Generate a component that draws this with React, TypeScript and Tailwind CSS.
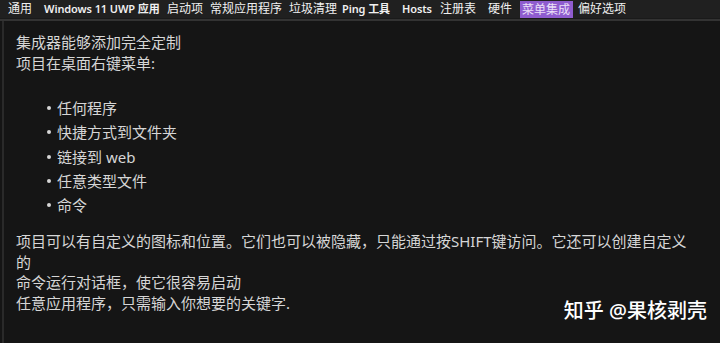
const tabs = [
    {label: "通用", w: "w-[36px]", latin: false},
    {label: "Windows 11 UWP 应用", w: "w-[123px]", latin: true},
    {label: "启动项", w: "w-[43px]", latin: false},
    {label: "常规应用程序", w: "w-[79px]", latin: false},
    {label: "垃圾清理", w: "w-[53px]", latin: false},
    {label: "Ping 工具", w: "w-[60px]", latin: true},
    {label: "Hosts", w: "w-[38px]", latin: true},
    {label: "注册表", w: "w-[48px]", latin: false},
    {label: "硬件", w: "w-[32px]", latin: false},
    {label: "菜单集成", w: "w-[58px]", latin: false, active: true},
    {label: "偏好选项", w: "w-[60px]", latin: false},
]

const items = ["任何程序", "快捷方式到文件夹", "链接到 web", "任意类型文件", "命令"]

export default function App() {
    return (
        <div
            className="w-[720px] h-[343px] bg-[#151515] flex flex-col overflow-hidden relative"
            style={{fontFamily: '"Noto Sans", "Noto Sans CJK SC", sans-serif'}}
        >
            <div className="h-[18px] bg-[#202020] flex items-center pl-[8px] text-[12px] text-[#f0f0f0] whitespace-nowrap">
                {tabs.map(t => (
                    <div key={t.label} className={t.w + " shrink-0 flex items-center"}>
                        {t.active ? (
                            <span className="bg-[#8f5ccf] text-[#ebe0f8] pl-[2px] w-[53px] h-[17px] leading-[17px]">{t.label}</span>
                        ) : (
                            <span className={t.latin ? "font-semibold text-[11px] tracking-[-0.1px]" : ""}>{t.label}</span>
                        )}
                    </div>
                ))}
            </div>
            <div className="h-[1px] bg-[#1a1a1a]" />
            <div className="h-[2px] bg-[#333333]" />
            <div className="flex-1 border-l-[2px] border-[#2a2a2a] ml-[2px] pl-[12px] pt-[11px] text-[15px] text-[#d6d6d6]">
                <div className="leading-[21px]">
                    <div>集成器能够添加完全定制</div>
                    <div>项目在桌面右键菜单:</div>
                </div>
                <ul className="mt-[22px] pl-[31px] flex flex-col leading-[24.3px]">
                    {items.map(i => (
                        <li key={i} className="flex items-center gap-[6px]">
                            <span className="w-[4px] h-[4px] rounded-full bg-[#d6d6d6]" />
                            <span>{i}</span>
                        </li>
                    ))}
                </ul>
                <div className="mt-[14px] leading-[20.5px]">
                    <div>项目可以有自定义的图标和位置。它们也可以被隐藏，只能通过按SHIFT键访问。它还可以创建自定义</div>
                    <div>的</div>
                    <div>命令运行对话框，使它很容易启动</div>
                    <div>任意应用程序，只需输入你想要的关键字.</div>
                </div>
            </div>
            <div className="absolute right-[13px] bottom-[17px] text-[20px] text-white font-medium">
                知乎 @果核剥壳
            </div>
        </div>
    )
}
